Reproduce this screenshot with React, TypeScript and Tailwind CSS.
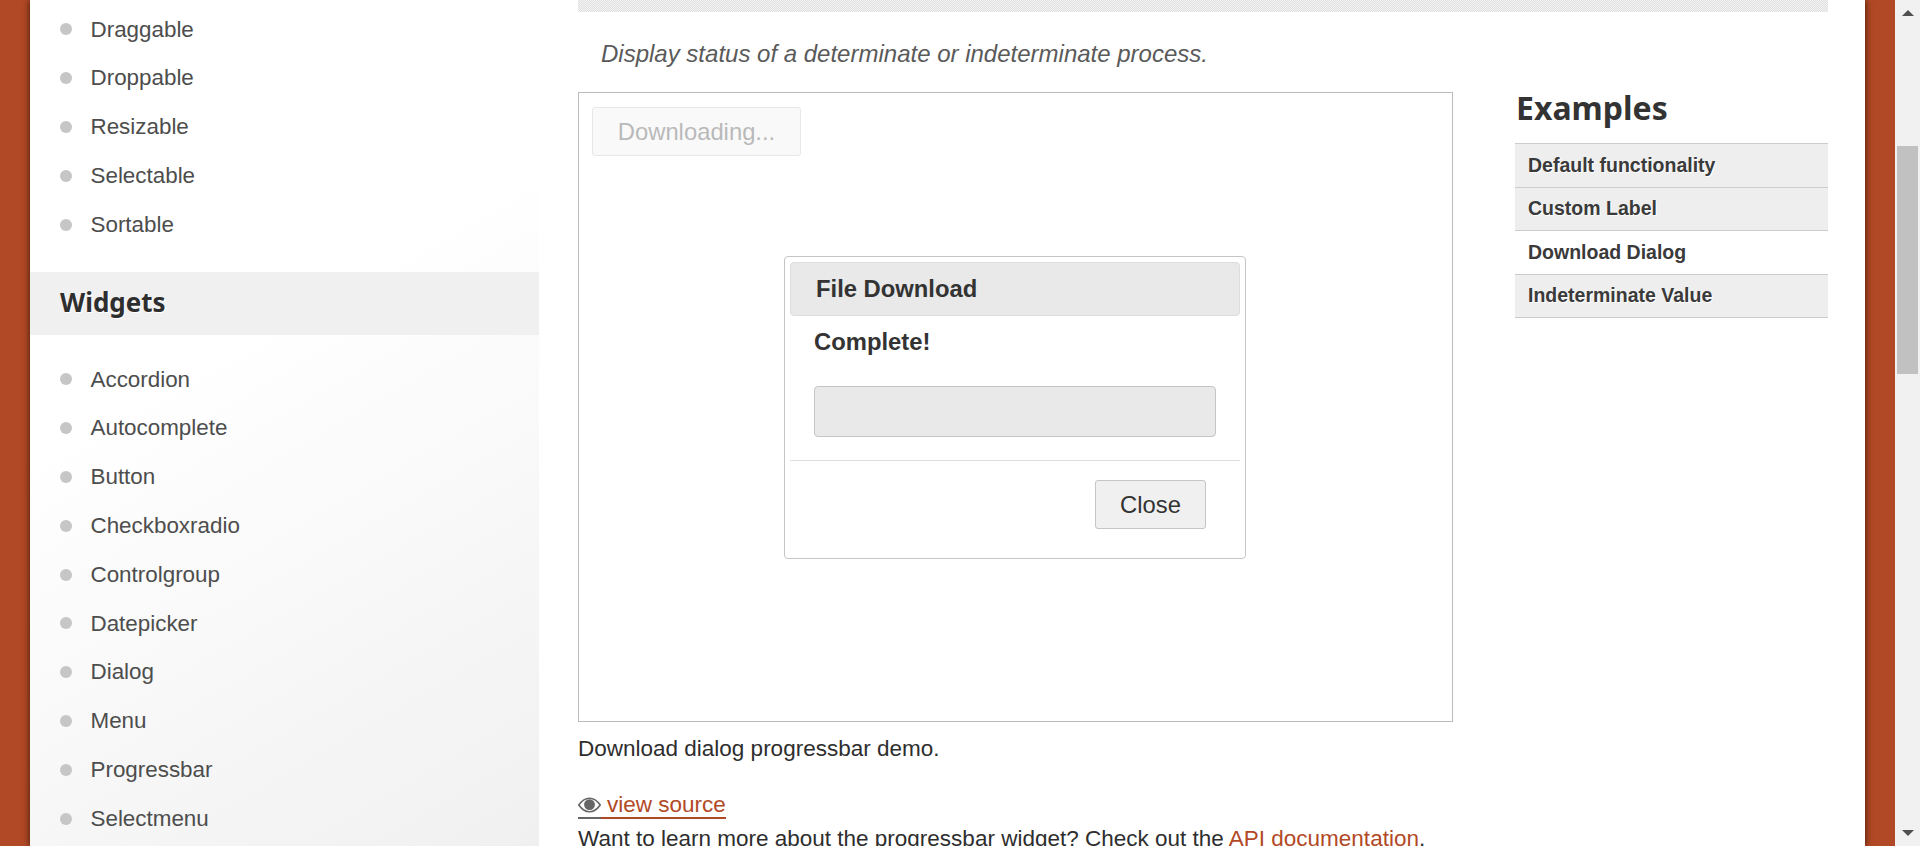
const topItems = ["Draggable", "Droppable", "Resizable", "Selectable", "Sortable"]
const widgetItems = [
  "Accordion",
  "Autocomplete",
  "Button",
  "Checkboxradio",
  "Controlgroup",
  "Datepicker",
  "Dialog",
  "Menu",
  "Progressbar",
  "Selectmenu",
]
const examples = [
  { label: "Default functionality", active: false },
  { label: "Custom Label", active: false },
  { label: "Download Dialog", active: true },
  { label: "Indeterminate Value", active: false },
]

function NavItem({ label }: { label: string }) {
  return (
    <li className="flex h-[48.8px] items-center pl-[30px] text-[22.4px] text-[#4d4d4d]">
      <span className="mr-[18.5px] h-[12px] w-[12px] rounded-full bg-[#c6c6c6] blur-[0.6px]" />
      {label}
    </li>
  )
}

function Sidebar() {
  return (
    <aside className="h-full w-[509px] shrink-0 bg-[linear-gradient(150deg,#ffffff_40%,#f0f0f0_100%)] pt-[5px]">
      <ul>
        {topItems.map((item) => (
          <NavItem key={item} label={item} />
        ))}
      </ul>
      <h2 className="mt-[23px] flex h-[63px] items-center bg-[#f0f0f0] pb-[2px] pl-[30px] font-['Noto_Sans'] text-[26px] font-bold text-[#2e2e2e] [text-shadow:1px_1px_0_#fff]">
        Widgets
      </h2>
      <ul className="mt-[20px]">
        {widgetItems.map((item) => (
          <NavItem key={item} label={item} />
        ))}
      </ul>
    </aside>
  )
}

function DownloadDialog() {
  return (
    <div className="absolute left-[205px] top-[163px] h-[303px] w-[462px] rounded-[4px] border border-[#c5c5c5] bg-white p-[5px]">
      <div className="flex h-[54px] items-center rounded-[4px] border border-[#dddddd] bg-[#e9e9e9] pl-[25px] text-[23.8px] font-bold text-[#333333]">
        File Download
      </div>
      <div className="px-[24px]">
        <div className="mt-[10px] text-[23.8px] leading-[32px] font-bold text-[#333333]">Complete!</div>
        <div className="mt-[28px] h-[51px] rounded-[4px] border border-[#c5c5c5] bg-[#e9e9e9]" />
      </div>
      <div className="mt-[23px] flex justify-end border-t border-[#dddddd] pr-[34px] pt-[19px]">
        <button className="h-[49px] w-[111px] rounded-[3px] border border-[#c5c5c5] bg-[#f0f0f0] text-[23.8px] text-[#333333]">
          Close
        </button>
      </div>
    </div>
  )
}

function EyeIcon() {
  return (
    <svg width="23" height="16" viewBox="0 0 23 16" className="block">
      <path
        d="M0.8 8C4 3.4 7.6 1.2 11.5 1.2S19 3.4 22.2 8C19 12.6 15.4 14.8 11.5 14.8S4 12.6 0.8 8Z"
        fill="none"
        stroke="#666666"
        strokeWidth="1.6"
      />
      <circle cx="11.5" cy="7.6" r="5.4" fill="#666666" />
    </svg>
  )
}

function Examples() {
  return (
    <aside className="ml-[62px] w-[313px] shrink-0">
      <h2 className="flex h-[51px] items-center pb-[20px] pl-[1px] font-['Noto_Sans'] text-[32px] font-bold text-[#333333] [text-shadow:1px_1px_0_#fff]">
        Examples
      </h2>
      <ul className="border-t border-[#cccccc]">
        {examples.map((ex) => (
          <li
            key={ex.label}
            className={`flex h-[43.5px] items-center border-b border-[#cccccc] pl-[13px] text-[19.5px] font-bold text-[#3a3a3a] [text-shadow:1px_1px_0_#fff] ${
              ex.active ? "bg-white" : "bg-[#eeeeee]"
            }`}
          >
            {ex.label}
          </li>
        ))}
      </ul>
    </aside>
  )
}

function Scrollbar() {
  return (
    <div className="flex h-full w-[25px] shrink-0 flex-col items-center bg-[#f1f1f1]">
      <div className="mt-[10px] h-0 w-0 border-x-[6px] border-b-[6px] border-x-transparent border-b-[#505050]" />
      <div className="mt-[130px] h-[228px] w-[21px] bg-[#c1c1c1]" />
      <div className="mt-[456px] h-0 w-0 border-x-[6px] border-t-[6px] border-x-transparent border-t-[#505050]" />
    </div>
  )
}

export default function App() {
  return (
    <div className="flex h-[846px] overflow-hidden bg-[#b24926] font-['Liberation_Sans',Arial,sans-serif]">
      <div className="ml-[30px] mr-[30px] flex min-w-0 flex-1 bg-white shadow-[0_0_7px_rgba(40,15,0,0.9)]">
        <Sidebar />
        <main className="min-w-0 flex-1 pl-[39px] pr-[37px]">
          <div className="h-[12px] bg-[repeating-conic-gradient(#e0e0e0_0_25%,#f3f3f3_0_50%)] bg-[length:2px_2px]" />
          <p className="flex h-[80px] items-center pl-[23px] pt-[3px] text-[24px] text-[#5a5a5a] italic">
            Display status of a determinate or indeterminate process.
          </p>
          <div className="flex">
            <div className="w-[875px] shrink-0">
              <div className="relative h-[630px] border border-[#bbbbbb] bg-white">
                <button className="ml-[13px] mt-[14px] h-[49px] w-[209px] rounded-[3px] border border-[#e8e8e8] bg-[#f9f9f9] text-[23.8px] text-[#b9b9b9]">
                  Downloading...
                </button>
                <DownloadDialog />
              </div>
              <p className="mt-[10px] text-[22.5px] leading-[33px] text-[#2e2e2e]">
                Download dialog progressbar demo.
              </p>
              <p className="mt-[27px] flex h-[27px] w-fit items-stretch text-[22.5px] text-[#b24926]">
                <span className="flex items-center border-b-2 border-[#666666]">
                  <EyeIcon />
                </span>
                <span className="flex items-center border-b-2 border-[#b24926] pl-[6px]">view source</span>
              </p>
              <p className="mt-[2px] text-[22.5px] leading-[35px] whitespace-nowrap text-[#2e2e2e]">
                Want to learn more about the progressbar widget? Check out the{" "}
                <span className="text-[#b24926]">API documentation</span>.
              </p>
            </div>
            <Examples />
          </div>
        </main>
      </div>
      <Scrollbar />
    </div>
  )
}
